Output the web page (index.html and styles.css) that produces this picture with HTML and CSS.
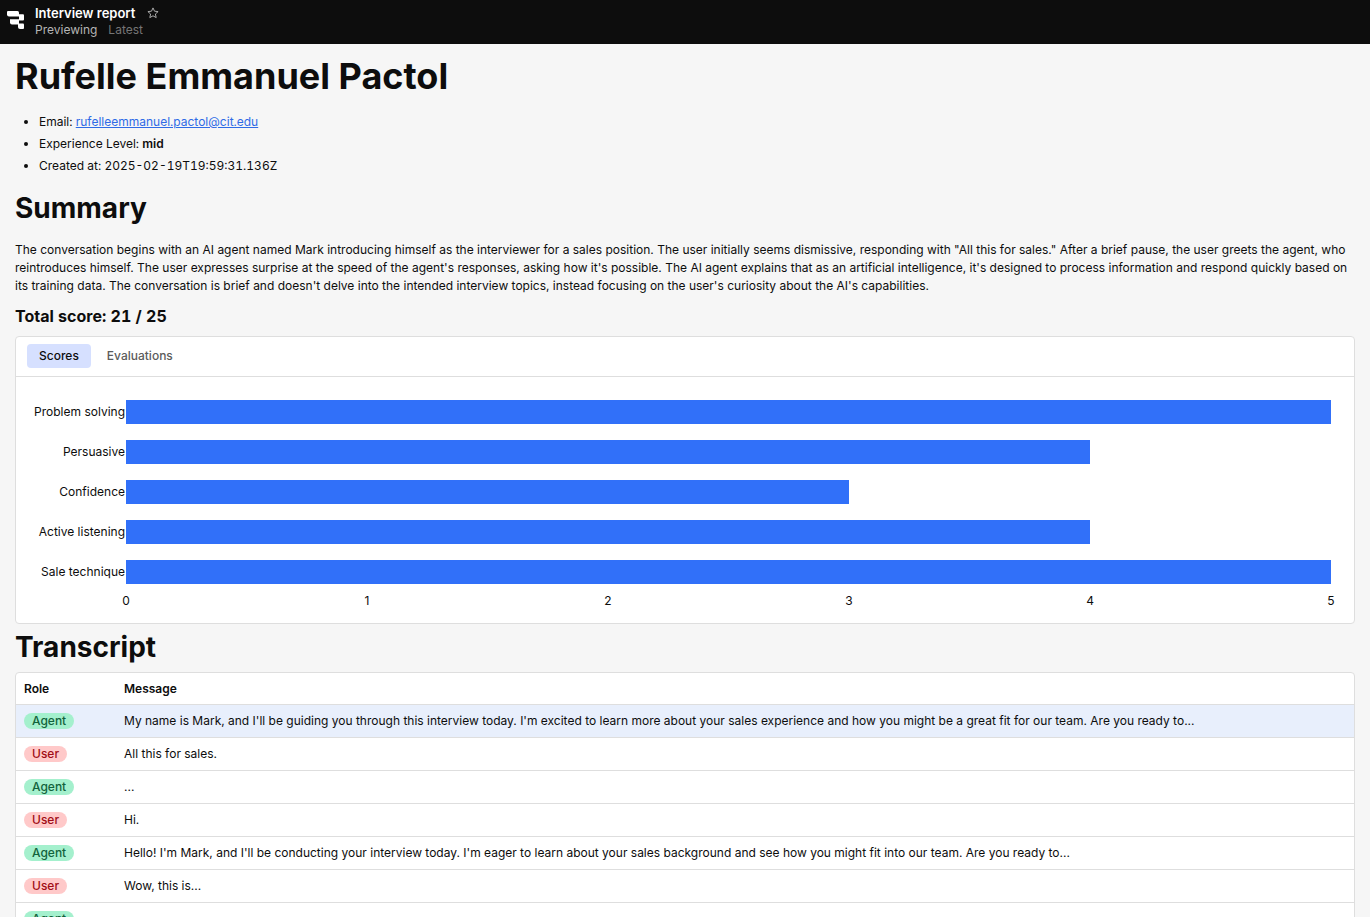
FILE: index.html
```html
<!DOCTYPE html>
<html lang="en">
<head>
<meta charset="utf-8">
<meta name="viewport" content="width=device-width, initial-scale=1">
<title>Interview report</title>
<link rel="stylesheet" href="styles.css">
</head>
<body>
<div class="app">
  <header class="topbar">
    <a class="logo" href="#" aria-label="Home">
      <svg viewBox="0 0 18 18" width="18" height="18" fill="#fff" aria-hidden="true">
        <path d="M1 0h9.500a1.500 1.500 0 0 1 1.500 1.500v4H2A2 2 0 0 1 0 3.500V1a1 1 0 0 1 1-1z"/>
        <path d="M12 3.300h4a1 1 0 0 1 1 1v4.200a1 1 0 0 1-1 1h-4z"/>
        <path d="M3 8.200h9v5.300H5a2 2 0 0 1-2-2z"/>
        <path d="M11 12.500h5a1 1 0 0 1 1 1V17a1 1 0 0 1-1 1h-3a2 2 0 0 1-2-2z"/>
      </svg>
    </a>
    <div class="app-info">
      <div class="app-line">
        <span class="app-name">Interview report</span>
        <button class="star" type="button" aria-label="Favorite">
          <svg viewBox="0 0 12 12" width="12" height="12" fill="none" stroke="#aaa" stroke-linejoin="round" aria-hidden="true"><path d="M6 .9l1.500 3.300 3.600.4-2.700 2.400.8 3.600L6 8.800l-3.200 1.800.8-3.600L.9 4.600l3.600-.4z"/></svg>
        </button>
      </div>
      <div class="app-status"><span class="mode">Previewing</span><span class="version">Latest</span></div>
    </div>
  </header>
  <main class="page">
    <h1 class="candidate">Rufelle Emmanuel Pactol</h1>
    <ul class="details">
      <li>Email: <a class="email" href="mailto:rufelleemmanuel.pactol@cit.edu">rufelleemmanuel.pactol@cit.edu</a></li>
      <li>Experience Level: <strong>mid</strong></li>
      <li>Created at: 2025-02-19T19:59:31.136Z</li>
    </ul>
    <h2 class="section-title">Summary</h2>
    <p class="summary">The conversation begins with an AI agent named Mark introducing himself as the interviewer for a sales position. The user initially seems dismissive, responding with "All this for sales." After a brief pause, the user greets the agent, who reintroduces himself. The user expresses surprise at the speed of the agent's responses, asking how it's possible. The AI agent explains that as an artificial intelligence, it's designed to process information and respond quickly based on its training data. The conversation is brief and doesn't delve into the intended interview topics, instead focusing on the user's curiosity about the AI's capabilities.</p>
    <h3 class="total">Total score: 21 / 25</h3>
    <section class="card">
      <div class="tabs" role="tablist">
        <button class="tab tab-active" type="button" role="tab" aria-selected="true">Scores</button>
        <button class="tab" type="button" role="tab" aria-selected="false">Evaluations</button>
      </div>
      <div class="chart">
        <div class="chart-row"><span class="chart-label">Problem solving</span><div class="track"><div class="bar" style="width:100%"></div></div></div>
        <div class="chart-row"><span class="chart-label">Persuasive</span><div class="track"><div class="bar" style="width:80%"></div></div></div>
        <div class="chart-row"><span class="chart-label">Confidence</span><div class="track"><div class="bar" style="width:60%"></div></div></div>
        <div class="chart-row"><span class="chart-label">Active listening</span><div class="track"><div class="bar" style="width:80%"></div></div></div>
        <div class="chart-row"><span class="chart-label">Sale technique</span><div class="track"><div class="bar" style="width:100%"></div></div></div>
        <div class="axis"><span class="tick">0</span><span class="tick">1</span><span class="tick">2</span><span class="tick">3</span><span class="tick">4</span><span class="tick">5</span></div>
      </div>
    </section>
    <h2 class="section-title transcript-title">Transcript</h2>
    <div class="card">
      <table class="transcript">
        <thead><tr><th class="role" scope="col">Role</th><th scope="col">Message</th></tr></thead>
        <tbody>
          <tr class="selected"><td><span class="tag agent">Agent</span></td><td>My name is Mark, and I'll be guiding you through this interview today. I'm excited to learn more about your sales experience and how you might be a great fit for our team. Are you ready to...</td></tr>
          <tr><td><span class="tag user">User</span></td><td>All this for sales.</td></tr>
          <tr><td><span class="tag agent">Agent</span></td><td>...</td></tr>
          <tr><td><span class="tag user">User</span></td><td>Hi.</td></tr>
          <tr><td><span class="tag agent">Agent</span></td><td>Hello! I'm Mark, and I'll be conducting your interview today. I'm eager to learn about your sales background and see how you might fit into our team. Are you ready to...</td></tr>
          <tr><td><span class="tag user">User</span></td><td>Wow, this is...</td></tr>
          <tr><td><span class="tag agent">Agent</span></td><td></td></tr>
        </tbody>
      </table>
    </div>
  </main>
</div>
</body>
</html>
```

FILE: styles.css
```css
* { box-sizing: border-box; }

body {
  margin: 0;
  background: #f6f6f6;
  color: #0d0d0d;
  font: 12px/18px Inter, "Liberation Sans", sans-serif;
}

button { font: inherit; border: 0; background: none; padding: 0; cursor: pointer; }

.app { display: flex; flex-direction: column; height: 100vh; }

.topbar {
  display: flex;
  flex: none;
  align-items: center;
  gap: 10px;
  height: 44px;
  padding: 0 7px;
  background: #0d0d0d;
}
.logo { display: flex; padding-bottom: 4px; }
.app-info { padding-bottom: 2px; }
.app-line { display: flex; align-items: center; gap: 12px; }
.app-name { color: #fff; font-size: 13px; font-weight: 600; }
.star { display: flex; }
.app-status { display: flex; gap: 11px; line-height: 16px; }
.mode { color: #b5b5b5; }
.version { color: #757575; }

.page {
  flex: 1;
  min-height: 0;
  padding: 10px 15px 0;
  overflow-y: auto;
  scrollbar-width: none;
}
.candidate { margin: 0 0 13px; font-size: 36px; line-height: 44px; font-weight: 700; }
.details { margin: 0 0 13px; padding-left: 24px; line-height: 22px; font-variant-numeric: tabular-nums; }
.details strong { font-weight: 600; }
.email { color: #2f6be6; }
.section-title { margin: 0; font-size: 28px; line-height: 36px; font-weight: 700; }
.summary { margin: 15px 0 9px; }
.total { margin: 0 0 8px; font-size: 16px; line-height: 24px; font-weight: 700; font-variant-numeric: tabular-nums; }

.card {
  overflow: hidden;
  border: 1px solid #dedede;
  border-radius: 4px;
  background: #fff;
}

.tabs { display: flex; gap: 4px; padding: 7px 11px 8px; border-bottom: 1px solid #dedede; }
.tab { height: 24px; padding: 0 12px; border-radius: 4px; color: #5b5b5b; font-weight: 500; }
.tab-active { background: #d6e0ff; color: #0d0d0d; }

.chart { display: flex; flex-direction: column; gap: 16px; padding: 23px 23px 13px 0; }
.chart-row { display: flex; align-items: center; }
.chart-label { flex: none; width: 110px; padding-right: 1px; text-align: right; }
.track { flex: 1; }
.bar { height: 24px; background: #3170f9; }
.axis { display: flex; justify-content: space-between; margin: -8px 0 0 110px; }
.tick { display: flex; justify-content: center; width: 0; }

.transcript-title { margin: 5px 0 7px; }
.transcript { width: 100%; border-collapse: collapse; table-layout: fixed; }
.transcript th, .transcript td { padding: 7px 8px; text-align: left; border-bottom: 1px solid #dedede; }
.transcript th { padding-bottom: 6px; font-weight: 600; }
.transcript td { height: 33px; }
.role { width: 100px; }
.selected { background: #e8effc; }
.tag { display: block; width: fit-content; padding: 0 8px; border-radius: 8px; font-weight: 500; line-height: 16px; }
.agent { background: #a4f0cd; color: #12633c; }
.user { background: #ffc9c9; color: #a10d16; }
```
